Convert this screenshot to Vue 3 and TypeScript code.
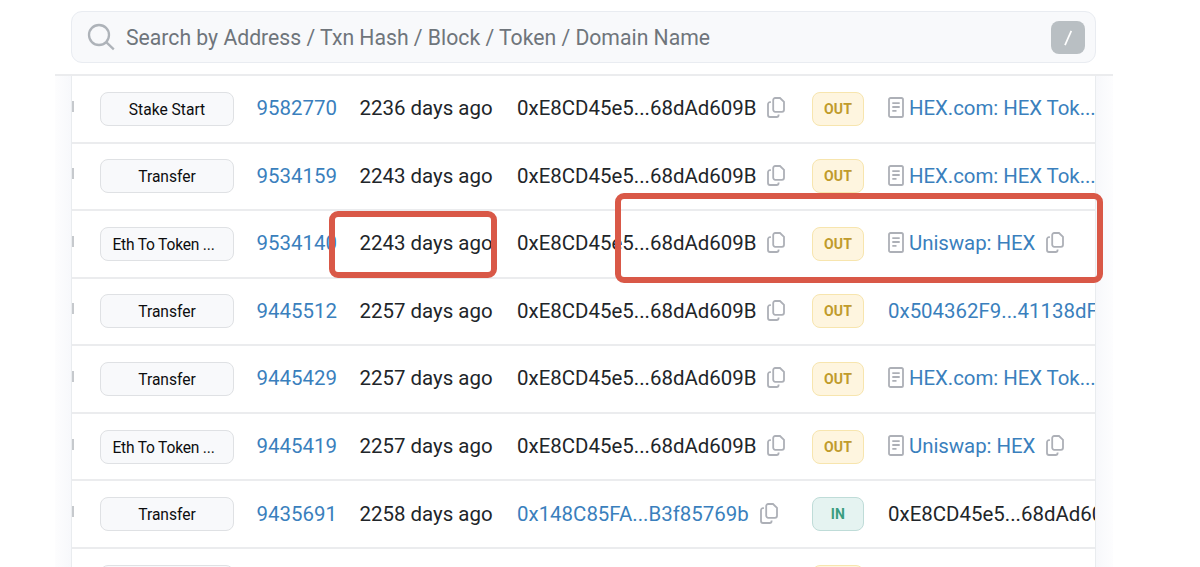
<script setup lang="ts">
interface Row {
  method: string
  clipped?: boolean
  block: string
  age: string
  from: string
  fromLink?: boolean
  dir: 'OUT' | 'IN'
  to: string
  toLink: boolean
  contract?: boolean
  copy?: boolean
}

const own = '0xE8CD45e5...68dAd609B'

const rows: Row[] = [
  { method: 'Stake Start', block: '9582770', age: '2236 days ago', from: own, dir: 'OUT', to: 'HEX.com: HEX Tok...', toLink: true, contract: true },
  { method: 'Transfer', block: '9534159', age: '2243 days ago', from: own, dir: 'OUT', to: 'HEX.com: HEX Tok...', toLink: true, contract: true },
  { method: 'Eth To Token ...', clipped: true, block: '9534140', age: '2243 days ago', from: own, dir: 'OUT', to: 'Uniswap: HEX', toLink: true, contract: true, copy: true },
  { method: 'Transfer', block: '9445512', age: '2257 days ago', from: own, dir: 'OUT', to: '0x504362F9...41138dF', toLink: true },
  { method: 'Transfer', block: '9445429', age: '2257 days ago', from: own, dir: 'OUT', to: 'HEX.com: HEX Tok...', toLink: true, contract: true },
  { method: 'Eth To Token ...', clipped: true, block: '9445419', age: '2257 days ago', from: own, dir: 'OUT', to: 'Uniswap: HEX', toLink: true, contract: true, copy: true },
  { method: 'Transfer', block: '9435691', age: '2258 days ago', from: '0x148C85FA...B3f85769b', fromLink: true, dir: 'IN', to: own, toLink: false },
  { method: '', block: '', age: '', from: '', dir: 'OUT', to: '', toLink: false },
]
</script>

<template>
  <div class="page">
    <header class="top">
      <div class="search">
        <svg class="lens" viewBox="0 0 28 28" width="28" height="28">
          <circle cx="12" cy="12" r="10" />
          <path d="M19.2 19.2 L26.8 26.4" />
        </svg>
        <span class="placeholder">Search by Address / Txn Hash / Block / Token / Domain Name</span>
        <span class="key">
          <svg viewBox="0 0 34 33" width="34" height="33"><path d="M14 24.2 L20.3 9.8" /></svg>
        </span>
      </div>
    </header>
    <main class="body">
      <div class="table">
        <div v-for="(r, i) in rows" :key="i" class="row">
          <span class="stub"></span>
          <span class="method" :class="{ clipped: r.clipped }">{{ r.method }}</span>
          <span class="link block">{{ r.block }}</span>
          <span class="age">{{ r.age }}</span>
          <span class="addr">
            <span class="addr-text" :class="{ link: r.fromLink }">{{ r.from }}</span>
            <svg v-if="r.from" class="copy" viewBox="0 0 18 21" width="18" height="21">
              <path d="M8.2 1 H13 L17 4.8 V12.8 A2 2 0 0 1 15 14.8 H8.2 A2 2 0 0 1 6.2 12.8 V3 A2 2 0 0 1 8.2 1 Z" />
              <path d="M3.9 5.2 H3 A2 2 0 0 0 1 7.2 V18 A2 2 0 0 0 3 20 H9.6 A2 2 0 0 0 11.6 18 V17.4" />
            </svg>
          </span>
          <span class="badge" :class="r.dir === 'IN' ? 'in' : 'out'">{{ i < 7 ? r.dir : '' }}</span>
          <span class="dest">
            <svg v-if="r.contract" class="doc" viewBox="0 0 16 21" width="16" height="21">
              <rect x="1" y="1" width="14" height="19" rx="1.6" />
              <path d="M4.3 6.1 H11.7 M4.3 10 H11.7 M4.3 13.9 H8.5" />
            </svg>
            <span class="dest-text" :class="{ link: r.toLink, named: r.contract }">{{ r.to }}</span>
            <svg v-if="r.copy" class="copy" viewBox="0 0 18 21" width="18" height="21">
              <path d="M8.2 1 H13 L17 4.8 V12.8 A2 2 0 0 1 15 14.8 H8.2 A2 2 0 0 1 6.2 12.8 V3 A2 2 0 0 1 8.2 1 Z" />
              <path d="M3.9 5.2 H3 A2 2 0 0 0 1 7.2 V18 A2 2 0 0 0 3 20 H9.6 A2 2 0 0 0 11.6 18 V17.4" />
            </svg>
          </span>
        </div>
      </div>
    </main>
    <div class="mark mark-age"></div>
    <div class="mark mark-swap"></div>
  </div>
</template>

<style scoped>
.page {
  position: relative;
  width: 1200px;
  height: 567px;
  overflow: hidden;
  background: #fff;
  box-sizing: border-box;
  padding: 0 87px 0 55px;
  font-family: Roboto, "Liberation Sans", sans-serif;
  font-size: 20.45px;
  color: #212529;
}
.page * { box-sizing: border-box; }
.top {
  width: 1058px;
  height: 76px;
  padding: 11px 17px 0 16px;
  border-bottom: 2px solid #ebecee;
}
.search {
  height: 52px;
  display: flex;
  align-items: center;
  padding: 0 10px 0 15px;
  border: 1.5px solid #e9ecf1;
  border-radius: 11px;
  background: #f8f9fb;
}
.lens { flex: none; fill: none; stroke: #aeb3b9; stroke-width: 2.3; }
.placeholder {
  flex: 1;
  margin-left: 11px;
  color: #6f757b;
  font-size: 21.2px;
  white-space: nowrap;
}
.key { width: 34px; height: 33px; border-radius: 8px; background: #b9bfc3; }
.key svg { display: block; fill: none; stroke: #fff; stroke-width: 1.7; }
.body {
  width: 1058px;
  height: 491px;
  padding: 0 17px 0 16px;
  background: linear-gradient(90deg, #fdfdfe 0, #f7f8fb 16px, #f7f8fb 1041px, #fdfdfe 1058px);
}
.table {
  height: 491px;
  overflow: hidden;
  background: #fff;
  border-left: 1px solid #e9ecef;
  border-right: 1px solid #e9ecef;
}
.row {
  height: 67.55px;
  display: grid;
  grid-template-columns: 28px 134px 22.5px 103px 157.5px 295px 76px 1fr;
  align-items: center;
  border-bottom: 2px solid #ebecee;
  white-space: nowrap;
}
.stub { grid-column: 1; width: 2px; height: 11px; margin-top: -5px; background: #c6c9cd; }
.method {
  grid-column: 2;
  height: 34px;
  border: 1.5px solid #dfe1e4;
  border-radius: 8px;
  background: #f8f9fb;
  color: #0c0d0f;
  font-size: 15.6px;
  line-height: 34px;
  text-align: center;
}
.clipped { padding-right: 7px; letter-spacing: -0.2px; }
.block { grid-column: 4; margin-bottom: 1px; }
.age { grid-column: 5; margin-bottom: 1px; }
.addr { grid-column: 6; display: flex; align-items: center; }
.addr-text, .dest-text { margin-bottom: 1px; }
.badge {
  grid-column: 7;
  width: 52px;
  height: 34px;
  border: 1.5px solid;
  border-radius: 8px;
  font-size: 14px;
  font-weight: 700;
  line-height: 32px;
  letter-spacing: 0.2px;
  text-align: center;
}
.out { color: #c09b2c; background: #fef5df; border-color: #f7e5ae; }
.in { color: #3a9d80; background: #e5f3f1; border-color: #bfdcd8; }
.dest { grid-column: 8; display: flex; align-items: center; overflow: hidden; }
.named { letter-spacing: -0.06px; }
.link { color: #3a7fbd; }
.copy { flex: none; margin: 0 0 2px 11px; fill: none; stroke: #adb0b7; stroke-width: 1.8; }
.doc { flex: none; margin: 0 5px 2px 0; fill: none; stroke: #adb0b7; stroke-width: 1.8; }
.mark { position: absolute; border: 6px solid #d95847; border-radius: 9px; }
.mark-age { left: 329px; top: 211px; width: 168px; height: 67px; }
.mark-swap { left: 615px; top: 193px; width: 488px; height: 90px; }
</style>
